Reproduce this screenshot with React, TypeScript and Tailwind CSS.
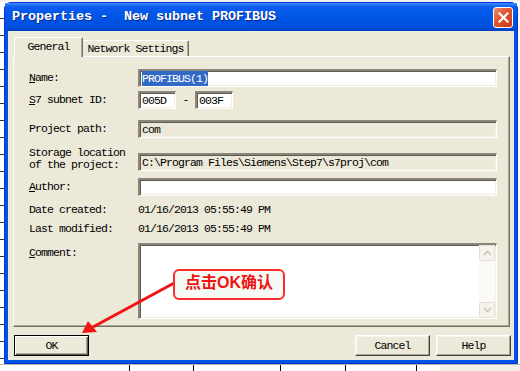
import React from 'react';

function Label({ children }: { children: React.ReactNode }) {
  return <div className="w-[109px] shrink-0 leading-[12px]">{children}</div>;
}

function Field({ white = true, className = '', children }: { white?: boolean; className?: string; children?: React.ReactNode }) {
  return (
    <div
      className={`h-[18px] flex items-center pl-[2px] overflow-hidden whitespace-pre border-t-2 border-l-2 border-b border-r border-t-[#8a877a] border-l-[#8a877a] border-b-white border-r-white shadow-[inset_1px_1px_#5e5c52,inset_-1px_-1px_#f1efe2] ${white ? 'bg-white' : 'bg-[#ece9d8]'} ${className}`}
    >
      {children}
    </div>
  );
}

function Button({ label, isDefault = false }: { label: string; isDefault?: boolean }) {
  if (isDefault) {
    return (
      <div className="w-[75px] h-[21px] flex items-center justify-center bg-[#ece9d8] border border-black shadow-[inset_1px_1px_#ffffff,inset_-1px_-1px_#5e5c52,inset_-2px_-2px_#aca899]">
        {label}
      </div>
    );
  }
  return (
    <div className="w-[75px] h-[21px] flex items-center justify-center bg-[#ece9d8] border border-t-white border-l-white border-b-[#404040] border-r-[#404040] shadow-[inset_-1px_-1px_#aca899,inset_1px_1px_#f5f4ee]">
      {label}
    </div>
  );
}

function ScrollButton({ up }: { up: boolean }) {
  return (
    <div className="w-[16px] h-[16px] rounded-[2px] border border-[#e3e0d3] bg-[#f4f3ee] flex items-center justify-center">
      <svg width="9" height="6" viewBox="0 0 9 6">
        <path d={up ? 'M1 5 L4.5 1.5 L8 5' : 'M1 1 L4.5 4.5 L8 1'} fill="none" stroke="#c9c6b7" strokeWidth="1.6" />
      </svg>
    </div>
  );
}

export default function App() {
  return (
    <div className="relative w-[520px] h-[371px] overflow-hidden bg-white flex flex-col font-['Liberation_Mono',monospace] text-[11.5px] tracking-[-0.9px] text-black">
      <div className="h-[2px] bg-[#f2f2f2]" />
      <div className="flex h-[362px]">
        {/* desktop behind the dialog */}
        <div className="w-[4px] bg-[repeating-linear-gradient(180deg,#ffffff_0px,#ffffff_16px,#333333_16px,#333333_17px)]" />

        <div className="w-[514px] h-full flex flex-col rounded-t-[7px] border border-[#0831d9] bg-[#0054e3] px-[3px] pb-[3px]">
          {/* title bar */}
          <div className="h-[28px] -mx-[3px] flex items-center justify-between pl-[7px] pr-[4px] bg-[linear-gradient(180deg,#3d8cff_0%,#0a5ced_14%,#0055e5_50%,#0050dd_85%,#0042c4_100%)]">
            <span className="whitespace-pre text-white font-bold text-[13.5px] tracking-[-0.1px] [text-shadow:1px_1px_#0c2a8a]">
              Properties -  New subnet PROFIBUS
            </span>
            <div className="w-[20px] h-[21px] rounded-[3px] border border-white bg-[linear-gradient(135deg,#f08a6c_0%,#e1532f_45%,#c7391c_100%)] flex items-center justify-center">
              <svg width="11" height="11" viewBox="0 0 11 11">
                <path d="M1.5 1.5 L9.5 9.5 M9.5 1.5 L1.5 9.5" stroke="#ffffff" strokeWidth="2.2" strokeLinecap="square" />
              </svg>
            </div>
          </div>

          {/* client area */}
          <div className="flex-1 bg-[#ece9d8] flex flex-col pt-[6px]">
            <div className="ml-[5px] mr-[4px]">
              {/* tabs */}
              <div className="h-[19px] flex items-end pl-[1px]">
                <div className="relative z-10 w-[69px] h-[20px] -mb-[1px] bg-[#ece9d8] rounded-t-[2px] border-t border-l border-white border-r border-r-[#716f64] shadow-[inset_-1px_0_#aca899] flex items-center justify-center pb-[1px]">
                  General
                </div>
                <div className="w-[106px] h-[16px] bg-[#ece9d8] rounded-tr-[2px] border-t border-t-white border-r border-r-[#716f64] shadow-[inset_-1px_0_#aca899] flex items-center justify-center pt-[1px]">
                  Network Settings
                </div>
              </div>

              {/* tab panel */}
              <div className="h-[271px] flex flex-col pl-[15px] pr-[12px] border-t border-l border-white border-r border-b border-r-[#716f64] border-b-[#716f64] shadow-[inset_-1px_-1px_#aca899]">
                <div className="mt-[12px] flex items-center">
                  <Label>
                    <span className="underline">N</span>ame:
                  </Label>
                  <Field className="flex-1">
                    <span className="bg-[#316ac5] text-white">PROFIBUS(1)</span>
                  </Field>
                </div>

                <div className="mt-[4px] flex items-center">
                  <Label>
                    <span className="underline">S</span>7 subnet ID:
                  </Label>
                  <Field className="w-[38px]">005D</Field>
                  <span className="w-[19px] text-center">-</span>
                  <Field className="w-[38px]">003F</Field>
                </div>

                <div className="mt-[11px] flex items-center">
                  <Label>Project path:</Label>
                  <Field white={false} className="flex-1">com</Field>
                </div>

                <div className="mt-[9px] flex items-end">
                  <Label>
                    <div>Storage location</div>
                    <div>of the project:</div>
                  </Label>
                  <Field white={false} className="flex-1">C:\Program Files\Siemens\Step7\s7proj\com</Field>
                </div>

                <div className="mt-[7px] flex items-center">
                  <Label>
                    <span className="underline">A</span>uthor:
                  </Label>
                  <Field className="flex-1" />
                </div>

                <div className="mt-[5px] h-[18px] flex items-center">
                  <Label>Date created:</Label>
                  <span>01/16/2013 05:55:49 PM</span>
                </div>

                <div className="mt-[1px] h-[18px] flex items-center">
                  <Label>Last modified:</Label>
                  <span>01/16/2013 05:55:49 PM</span>
                </div>

                <div className="mt-[5px] flex items-start">
                  <div className="w-[109px] shrink-0 pt-[1px]">
                    <span className="underline">C</span>omment:
                  </div>
                  <div className="flex-1 h-[76px] flex justify-end bg-white border-t-2 border-l-2 border-b border-r border-t-[#8a877a] border-l-[#8a877a] border-b-white border-r-white shadow-[inset_1px_1px_#5e5c52,inset_-1px_-1px_#f1efe2]">
                    <div className="w-[16px] h-full flex flex-col justify-between bg-[#fbfaf6] mr-[1px] mb-[1px]">
                      <ScrollButton up />
                      <ScrollButton up={false} />
                    </div>
                  </div>
                </div>
              </div>
            </div>

            {/* buttons */}
            <div className="mt-[8px] flex justify-between pl-[6px] pr-[3px]">
              <Button label="OK" isDefault />
              <div className="flex gap-[6px]">
                <Button label="Cancel" />
                <Button label="Help" />
              </div>
            </div>
          </div>
        </div>

        <div className="w-[2px] bg-white" />
      </div>

      {/* desktop strip below the dialog */}
      <div className="h-[7px] flex border-t border-[#b5b5b5]">
        <div className="w-[130px] border-r border-black" />
        <div className="w-[64px] border-r border-black" />
        <div className="w-[87px] border-r border-black" />
        <div className="w-[65px] border-r border-black" />
        <div className="w-[71px] border-r border-black" />
        <div className="w-[23px]" />
        <div className="flex-1 bg-[#f1efe6]" />
      </div>

      {/* annotation */}
      <svg className="absolute left-0 top-0 pointer-events-none" width="520" height="371" viewBox="0 0 520 371">
        <line x1="176" y1="282" x2="93" y2="327" stroke="#f01414" strokeWidth="3" />
        <polygon points="82,333 88,321 97,332" fill="#f01414" />
      </svg>
      <div className="absolute left-[173px] top-[269px] w-[112px] h-[31px] rounded-[6px] border-2 border-[#ff2a2a] bg-[#f6faf5] flex items-center justify-center pb-[3px] text-[#ee1414] font-bold text-[16px] tracking-normal font-['Liberation_Sans','Noto_Sans_CJK_SC',sans-serif]">
        点击OK确认
      </div>
    </div>
  );
}
